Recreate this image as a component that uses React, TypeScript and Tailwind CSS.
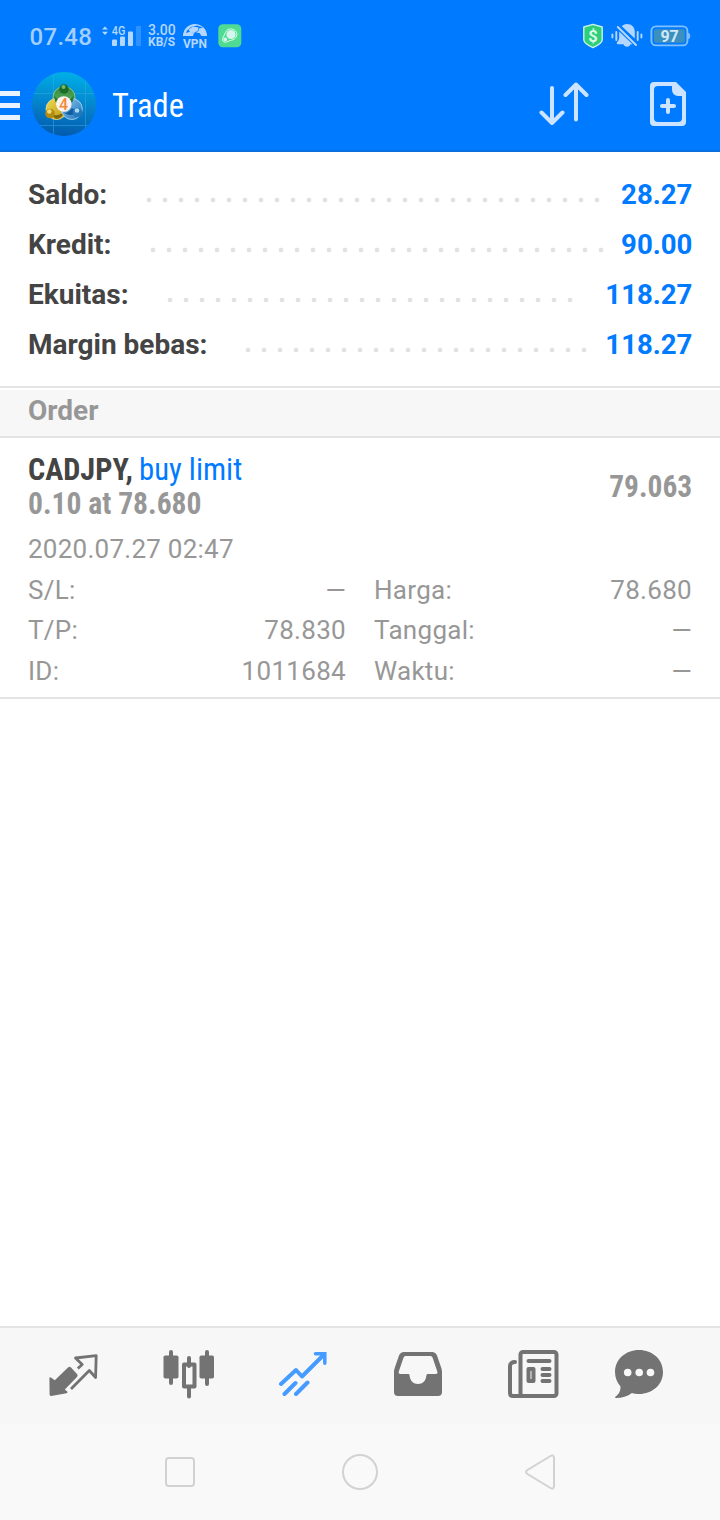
import type { ReactNode } from 'react';

type BalanceRow = {
  label: string;
  value: string;
  labelWidth: string;
  dotsWidth: string;
};

const balanceRows: BalanceRow[] = [
  { label: 'Saldo:', value: '28.27', labelWidth: 'w-[113px]', dotsWidth: 'w-[464px]' },
  { label: 'Kredit:', value: '90.00', labelWidth: 'w-[117px]', dotsWidth: 'w-[464px]' },
  { label: 'Ekuitas:', value: '118.27', labelWidth: 'w-[134px]', dotsWidth: 'w-[416px]' },
  { label: 'Margin bebas:', value: '118.27', labelWidth: 'w-[212px]', dotsWidth: 'w-[352px]' },
];

const orderDetails = [
  ['S/L:', '—', 'Harga:', '78.680'],
  ['T/P:', '78.830', 'Tanggal:', '—'],
  ['ID:', '1011684', 'Waktu:', '—'],
];

function SignalIcon() {
  return (
    <svg width="40" height="24" viewBox="0 0 40 24" fill="#b3d7ff">
      <path d="M0 5.6 3 2.4 6 5.6ZM0 7.8h6L3 11Z" />
      <text x="9.8" y="10.6" fontSize="12" fontWeight="500" textLength="13.6" lengthAdjust="spacingAndGlyphs">
        4G
      </text>
      <rect x="10" y="15.5" width="5" height="6.500" rx="1" />
      <rect x="18" y="12.5" width="5" height="9.500" rx="1" />
      <rect x="26" y="7.5" width="5" height="14.500" rx="1" />
      <rect x="34" y="2" width="5" height="20" rx="1" opacity="0.25" />
    </svg>
  );
}

function VpnIcon() {
  return (
    <svg className="overflow-visible" width="24" height="26" viewBox="0 0 24 26" fill="#b3d7ff">
      <path
        fillRule="evenodd"
        d="M0 13A12 12 0 0 1 24 13H18.500L16.500 10 13 9.500 15.500 8 16 5.500 20 4.500 14 2.500 8 4 4 7.500 3 10 8 8.500 11 10 10 13Z"
      />
      <path d="M5.500 6.500 10 3.500 15.500 4.500 15 7.500 11 10 7 9Z" />
      <text x="0" y="25" fontSize="13.5" fontWeight="700" textLength="24" lengthAdjust="spacingAndGlyphs">
        VPN
      </text>
    </svg>
  );
}

function CleanerIcon() {
  return (
    <svg width="24" height="24" viewBox="0 0 24 24" fill="none">
      <rect x="0.3" y="0.3" width="23" height="23" rx="4.5" fill="#4fdc92" />
      <path d="M7.600 8.300C8.600 5.800 11 4.600 13.500 5c3.600.5 5.800 3 5.300 6-.5 3.200-3.100 5-5.800 5.300L8.400 18c-2.500.9-4.600-1.200-3.700-3.500Z" stroke="#d6ffe9" strokeWidth="1" />
      <circle cx="13" cy="10.500" r="4.600" fill="#d6f5ee" />
      <circle cx="7.200" cy="15.500" r="1.900" fill="#d6f5ee" />
    </svg>
  );
}

function ShieldIcon() {
  return (
    <svg width="22" height="26" viewBox="0 0 22 26">
      <path d="M11 1.300 20.200 4v13c0 2.400-2.300 4.300-9.200 7.700-6.900-3.400-9.200-5.300-9.200-7.700V4Z" fill="#2ecf78" stroke="#c9f3e4" strokeWidth="1.400" strokeLinejoin="round" />
      <text x="11" y="18.500" fontSize="16.500" fontWeight="700" textAnchor="middle" fill="#d9fbe9">
        $
      </text>
    </svg>
  );
}

function MutedBellIcon() {
  return (
    <svg width="32" height="26" viewBox="0 0 32 26" fill="#b3d7ff">
      <path d="M1.400 11.500v3M5.300 9v8M26.700 9v8M30.400 11.500v3" stroke="#b3d7ff" strokeWidth="1.900" strokeLinecap="round" />
      <path d="M10.800 3.300C12.400 1.700 14 1 16 1c4.700 0 7.800 3.200 7.800 8v6.500ZM8.200 8.500 21.500 21.300H19.500c-.5 1.500-1.700 2.500-3.500 2.500s-3-1-3.500-2.500H7c-1.400 0-1.700-1.300-.8-2.200 1.500-1.500 2-3 2-5.600Z" />
      <path d="M6.800 4 25 22" fill="none" stroke="#b3d7ff" strokeWidth="2" strokeLinecap="round" />
    </svg>
  );
}

function BatteryIcon() {
  return (
    <svg width="41" height="22" viewBox="0 0 41 22" fill="none">
      <rect x="1.400" y="1.400" width="36" height="19" rx="4.500" stroke="#80c0ff" strokeWidth="1.900" />
      <rect x="4" y="4.200" width="30.800" height="13.600" rx="2" fill="#3c90c0" />
      <path d="M38.600 8.200c1.600.8 1.600 4.800 0 5.600Z" fill="#80c0ff" stroke="#80c0ff" />
      <text x="19.600" y="17" fontSize="16" fontWeight="700" textAnchor="middle" fill="#d0e8f5">
        97
      </text>
    </svg>
  );
}

function AppLogo() {
  return (
    <svg width="64" height="64" viewBox="0 0 64 64">
      <defs>
        <linearGradient id="sky" x1="0.600" y1="0" x2="0.500" y2="1">
          <stop offset="0" stopColor="#00b0e8" />
          <stop offset="0.500" stopColor="#0585cc" />
          <stop offset="1" stopColor="#045bae" />
        </linearGradient>
        <linearGradient id="green" x1="0" y1="0" x2="0" y2="1">
          <stop offset="0" stopColor="#2f8a3c" />
          <stop offset="1" stopColor="#6db868" />
        </linearGradient>
        <linearGradient id="gold" x1="0" y1="0" x2="1" y2="1">
          <stop offset="0" stopColor="#f0dc55" />
          <stop offset="1" stopColor="#b8930f" />
        </linearGradient>
        <linearGradient id="blue" x1="0" y1="0" x2="1" y2="1">
          <stop offset="0" stopColor="#8cc9ef" />
          <stop offset="1" stopColor="#1c72bd" />
        </linearGradient>
        <clipPath id="logo-clip">
          <circle cx="32" cy="32" r="32" />
        </clipPath>
      </defs>
      <circle cx="32" cy="32" r="32" fill="url(#sky)" />
      <path d="M21.500 0v64M53.500 0v64M0 21.500h64M0 53.500h64" stroke="#35a9e2" strokeWidth="0.900" opacity="0.600" clipPath="url(#logo-clip)" />
      <circle cx="32" cy="25.500" r="11" fill="url(#green)" stroke="#a5d59e" strokeWidth="0.800" />
      <circle cx="24.500" cy="37" r="10.500" fill="url(#gold)" stroke="#efe59b" strokeWidth="0.800" />
      <path d="M17 41c5 3 10 3 15-1-1 4-4 7-8 7Z" fill="#80690d" />
      <circle cx="39.800" cy="37" r="10.500" fill="url(#blue)" stroke="#b7def3" strokeWidth="0.800" />
      <path d="M46 40c-5 4-10 4-15 0 3 2 6 0 9-4Z" fill="#135b9d" />
      <path d="M21.500 23c1.500 3 6 4.500 10.500 4.500s9-1.500 10.500-4.500l-2 7-8.500 4-8.500-4Z" fill="#247a34" />
      <circle cx="32" cy="17" r="4.700" fill="#1d6a29" />
      <circle cx="31.500" cy="15" r="2" fill="#72b873" />
      <circle cx="18" cy="41.500" r="4.800" fill="#b48b12" />
      <circle cx="17.300" cy="39.500" r="2.300" fill="#f0dc70" />
      <circle cx="45.500" cy="40.500" r="4.800" fill="#2678bd" />
      <circle cx="45" cy="38.500" r="2.300" fill="#a5daf5" />
      <circle cx="31.800" cy="32" r="7.800" fill="#faf3f0" />
      <text x="31.600" y="37.800" fontSize="16" fontWeight="500" textAnchor="middle" fill="#f28a3c">
        4
      </text>
    </svg>
  );
}

function SortIcon() {
  return (
    <svg width="50" height="44" viewBox="0 0 50 44" fill="none" stroke="#cce4ff" strokeWidth="4" strokeLinecap="round" strokeLinejoin="round">
      <path d="M13 6v35M2.500 30.500 13 41l10.500-10.500M37 37.500v-35M26.500 13 37 2.500 47.500 13" />
    </svg>
  );
}

function NewOrderIcon() {
  return (
    <svg width="36" height="44" viewBox="0 0 36 44">
      <path
        fillRule="evenodd"
        d="M4 0H26L36 10V40a4 4 0 0 1-4 4H4a4 4 0 0 1-4-4V4a4 4 0 0 1 4-4ZM8 4a4 4 0 0 0-4 4v28a4 4 0 0 0 4 4h20a4 4 0 0 0 4-4V14h-4a6 6 0 0 1-6-6V4Z"
        fill="#cce4ff"
      />
      <path d="M18 18v12M12 24h12" stroke="#cce4ff" strokeWidth="4" strokeLinecap="round" />
    </svg>
  );
}

function QuotesIcon() {
  return (
    <svg width="50" height="44" viewBox="0 0 50 44" fill="#737373">
      <path d="M19 13.500Q20.500 12.200 22 13.500L28.200 20.200Q29.200 21.500 28 22.900L15.800 35.400 18.200 37.600Q19.200 38.900 17.600 39.300L2.200 42Q.6 42.200.6 40.600L.4 24.200Q.5 22.600 1.900 23.500L5.800 26.300Z" />
      <path d="M28.800 14.500 33.200 10.500 26.500 4 47.200 1.600 46.600 23.500 40.300 16.500 22 35" fill="none" stroke="#737373" strokeWidth="2.800" strokeLinejoin="round" />
    </svg>
  );
}

function ChartIcon() {
  return (
    <svg width="52" height="50" viewBox="0 0 52 50" fill="#737373">
      <path d="M8 3v31M44 3v32M26 9v8M26 38v9.500" stroke="#737373" strokeWidth="4" strokeLinecap="round" />
      <rect x="0.500" y="6.500" width="15" height="23" rx="1.800" />
      <rect x="36.500" y="6.500" width="14.500" height="23" rx="1.800" />
      <rect x="21" y="15.500" width="10.500" height="22" fill="none" stroke="#737373" strokeWidth="4" strokeLinejoin="round" />
    </svg>
  );
}

function TradeIcon() {
  return (
    <svg width="50" height="46" viewBox="0 0 50 46" fill="none" stroke="#459bff" strokeWidth="4" strokeLinecap="round" strokeLinejoin="round">
      <path d="M3 34 18 20 24 26.500 46 4.500M6.500 44 17.500 33M18 44 29.500 32.500" />
      <path d="M37.500 3.800H46.800v9.500" strokeLinejoin="miter" strokeWidth="3.500" />
    </svg>
  );
}

function InboxIcon() {
  return (
    <svg width="48" height="44" viewBox="0 0 48 44">
      <path
        fillRule="evenodd"
        d="M10 0H38C40.500 0 42 1.300 43 3.500L47.300 16C48 18 48 19.500 48 21V40A4 4 0 0 1 44 44H4A4 4 0 0 1 0 40V21C0 19.500 0 18 .7 16L5 3.500C6 1.300 7.500 0 10 0ZM12.500 4C10.700 4 10 4.600 9.400 6L4.800 19.500C4.300 21.300 5 22 6.700 22H14.500Q15.500 22 15.700 24C16.200 28.800 19.300 32 24 32S31.800 28.800 32.300 24Q32.500 22 33.500 22H41.500C43.200 22 43.800 21.300 43.300 19.500L38.700 6C38.100 4.600 37.500 4 35.700 4Z"
        fill="#737373"
      />
    </svg>
  );
}

function NewsIcon() {
  return (
    <svg width="51" height="48" viewBox="0 0 51 48" fill="none" stroke="#737373" strokeWidth="4" strokeLinecap="round">
      <rect x="12.500" y="2" width="36" height="44" rx="2.500" />
      <path d="M7 12C4 12 2 13.500 2 16V43C2 45 3 46 5 46H15" />
      <path d="M20.500 11h21M34.500 19h7M34.500 25h7M34.500 31h7" />
      <rect x="20.500" y="19" width="5" height="12" strokeLinejoin="round" />
    </svg>
  );
}

function ChatIcon() {
  return (
    <svg width="48" height="48" viewBox="0 0 48 48">
      <path d="M24 0C37.500 0 48 9.500 48 22S37.500 44 24 44C21.500 44 19 43.600 17 43 12.500 46.500 7 48 1 48 0 48-.2 47.200.7 46.500 4.500 43.500 5.500 41 5.500 36.500 2 32.500 0 27.500 0 22 0 9.500 10.500 0 24 0Z" fill="#737373" />
      <g fill="#f7f7f7">
        <circle cx="12.700" cy="22.500" r="3.800" />
        <circle cx="24.200" cy="22.500" r="3.800" />
        <circle cx="35.500" cy="22.500" r="3.800" />
      </g>
    </svg>
  );
}

function Condensed({ className, children }: { className: string; children: ReactNode }) {
  return (
    <span className={`block whitespace-nowrap font-['Roboto_Condensed',Roboto,sans-serif] [font-stretch:75%] ${className}`}>
      {children}
    </span>
  );
}

function StatusBar() {
  return (
    <div className="flex h-[72px] items-center">
      <span className="ml-[29.500px] mt-[2px] w-[72.500px] text-[24px] leading-[28px] font-medium tracking-[0.300px] text-[#a3cfff]">
        07.48
      </span>
      <SignalIcon />
      <div className="ml-[6px] flex w-[35px] flex-col text-[#b3d7ff]">
        <span className="text-[14px] font-medium leading-[12px]">3.00</span>
        <span className="text-[12px] font-bold leading-[12px]">KB/S</span>
      </div>
      <VpnIcon />
      <div className="ml-[11px]">
        <CleanerIcon />
      </div>
      <div className="ml-auto mr-[29px] flex items-center">
        <ShieldIcon />
        <div className="ml-[7px] mr-[7px]">
          <MutedBellIcon />
        </div>
        <BatteryIcon />
      </div>
    </div>
  );
}

function Toolbar() {
  return (
    <div className="flex h-20 items-center border-b-2 border-[#0a6fe0] pb-[14px]">
      <div className="mt-[2px] flex w-5 flex-col gap-[7px]">
        <div className="h-[5px] bg-[#e9f3ff]" />
        <div className="h-[5px] bg-[#e9f3ff]" />
        <div className="h-[5px] bg-[#e9f3ff]" />
      </div>
      <div className="ml-3">
        <AppLogo />
      </div>
      <Condensed className="ml-4 mt-[2px] origin-left scale-x-[0.955] text-[34px] leading-[40px] text-white">Trade</Condensed>
      <div className="ml-auto">
        <SortIcon />
      </div>
      <div className="ml-[61px] mr-[34px]">
        <NewOrderIcon />
      </div>
    </div>
  );
}

function BalanceSummary() {
  return (
    <div className="h-[236px] border-b-2 border-[#e4e4e4] px-7 pt-[18px]">
      {balanceRows.map((row) => (
        <div key={row.label} className="flex h-[50px] items-center text-[28px] font-bold leading-[50px]">
          <span className={`shrink-0 whitespace-nowrap text-[#444444] ${row.labelWidth}`}>{row.label}</span>
          <span
            className={`mt-[9px] h-[6px] shrink-0 bg-[radial-gradient(circle,#e2e2e2_2px,transparent_2.700px)] bg-[length:16px_6px] ${row.dotsWidth}`}
          />
          <span className="ml-auto origin-right scale-x-[0.985] text-[#007aff]">{row.value}</span>
        </div>
      ))}
    </div>
  );
}

function OrderCard() {
  return (
    <div className="h-[261px] border-b-2 border-[#e4e4e4] px-7 pt-[14px] text-[#979797]">
      <div className="flex items-center justify-between">
        <div className="flex flex-col">
          <div className="flex h-[34px] items-center">
            <Condensed className="origin-left scale-x-[0.945] text-[32px] font-bold leading-[34px] text-[#444444]">CADJPY,</Condensed>
            <Condensed className="origin-left scale-x-[0.96] text-[32px] leading-[34px] text-[#007aff]">buy limit</Condensed>
          </div>
          <Condensed className="origin-left scale-x-[0.925] text-[32px] font-bold leading-[34px]">0.10 at 78.680</Condensed>
        </div>
        <Condensed className="origin-right scale-x-[0.92] text-[32px] font-bold leading-[34px]">79.063</Condensed>
      </div>
      <div className="mt-[9px] text-[26px] leading-[40px] tracking-[0.250px]">2020.07.27 02:47</div>
      <div className="pt-[0.600px]">
        {orderDetails.map(([leftLabel, leftValue, rightLabel, rightValue]) => (
          <div key={leftLabel} className="grid h-[40.500px] grid-cols-2 gap-7 text-[26px] leading-[41px] tracking-[0.300px]">
            <div className="flex justify-between">
              <span>{leftLabel}</span>
              <span>{leftValue}</span>
            </div>
            <div className="flex justify-between">
              <span>{rightLabel}</span>
              <span>{rightValue}</span>
            </div>
          </div>
        ))}
      </div>
    </div>
  );
}

function TabBar() {
  return (
    <div className="flex h-[98px] items-start border-t-2 border-[#e4e4e4] bg-[#f7f7f7]">
      <div className="ml-[49px] mt-[26px]">
        <QuotesIcon />
      </div>
      <div className="ml-[64px] mt-[21px]">
        <ChartIcon />
      </div>
      <div className="ml-[63px] mt-[22px]">
        <TradeIcon />
      </div>
      <div className="ml-[66px] mt-[24px]">
        <InboxIcon />
      </div>
      <div className="ml-[66px] mt-[22px]">
        <NewsIcon />
      </div>
      <div className="ml-[56px] mt-[22px]">
        <ChatIcon />
      </div>
    </div>
  );
}

function SystemNavigation() {
  return (
    <div className="flex h-24 items-center bg-[#f9f9f9] pl-[165px]">
      <div className="h-[30px] w-[30px] rounded-[4px] border-2 border-[#d2d2d2]" />
      <div className="ml-[147px] h-9 w-9 rounded-full border-2 border-[#d2d2d2]" />
      <svg className="ml-[146px]" width="32" height="36" viewBox="0 0 32 36" fill="none" stroke="#d2d2d2" strokeWidth="2">
        <path d="M26.500 2C28.500 .8 30 1.800 30 4V32C30 34.200 28.500 35.200 26.500 34L3.500 20C1.500 18.700 1.500 17.300 3.500 16Z" />
      </svg>
    </div>
  );
}

export default function App() {
  return (
    <div className="flex h-[1520px] w-[720px] flex-col overflow-hidden bg-white font-[Roboto,sans-serif]">
      <header className="bg-[#007aff]">
        <StatusBar />
        <Toolbar />
      </header>
      <main className="flex-1">
        <BalanceSummary />
        <div className="mt-[2px] h-[48px] border-b-2 border-[#e4e4e4] bg-[#f7f7f7] px-7 text-[28px] font-bold leading-[41px] text-[#979797]">
          Order
        </div>
        <OrderCard />
      </main>
      <TabBar />
      <SystemNavigation />
    </div>
  );
}
